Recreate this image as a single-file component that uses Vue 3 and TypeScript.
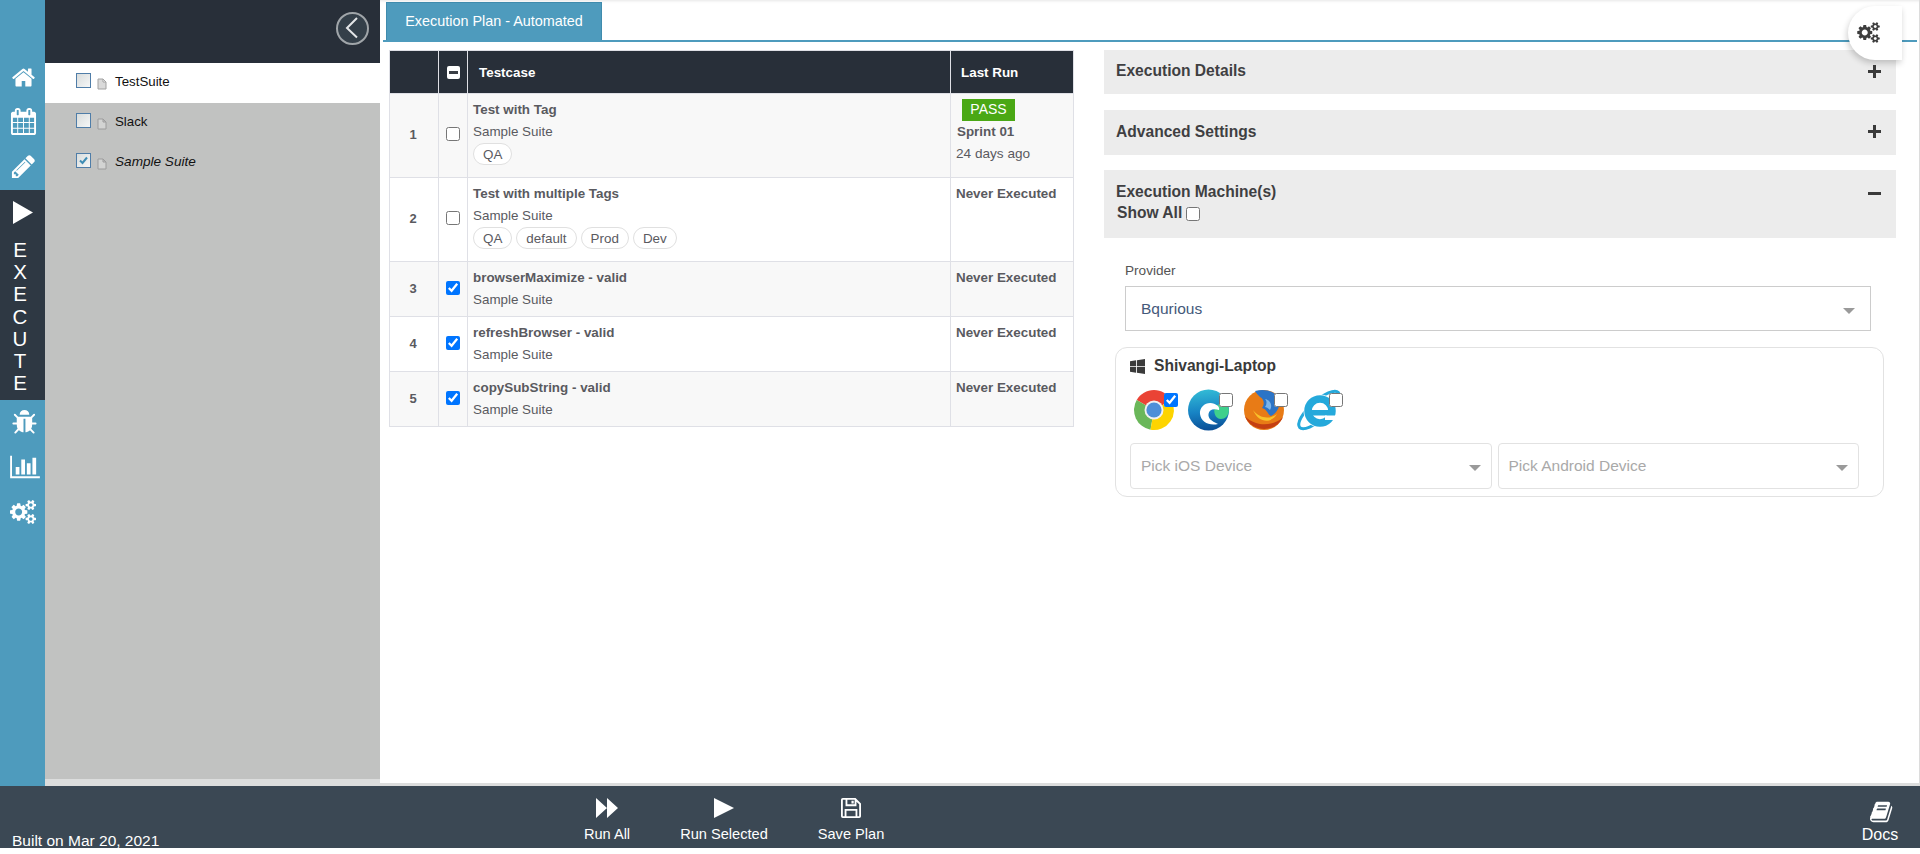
<script setup lang="ts">
interface Testcase {
  id: number
  name: string
  suite: string
  tags: string[]
  selected: boolean
  height: number
}

const suites = [
  { name: 'TestSuite', active: true, checked: false },
  { name: 'Slack', active: false, checked: false },
  { name: 'Sample Suite', active: false, checked: true }
]

const testcases: Testcase[] = [
  { id: 1, name: 'Test with Tag', suite: 'Sample Suite', tags: ['QA'], selected: false, height: 84 },
  { id: 2, name: 'Test with multiple Tags', suite: 'Sample Suite', tags: ['QA', 'default', 'Prod', 'Dev'], selected: false, height: 84 },
  { id: 3, name: 'browserMaximize - valid', suite: 'Sample Suite', tags: [], selected: true, height: 55 },
  { id: 4, name: 'refreshBrowser - valid', suite: 'Sample Suite', tags: [], selected: true, height: 55 },
  { id: 5, name: 'copySubString - valid', suite: 'Sample Suite', tags: [], selected: true, height: 55 }
]

const cogs = 'M896 896q0-106-75-181t-181-75-181 75-75 181 75 181 181 75 181-75 75-181zm768 512q0-52-38-90t-90-38-90 38-38 90q0 53 37.5 90.5t90.5 37.5 90.5-37.5 37.5-90.5zm0-1024q0-52-38-90t-90-38-90 38-38 90q0 53 37.5 90.5t90.5 37.5 90.5-37.5 37.5-90.5zm-384 421v185q0 10-7 19.5t-16 10.5l-155 24q-11 35-32 76 34 48 90 115 7 11 7 20 0 12-7 19-23 30-82.5 89.5t-78.5 59.5q-11 0-21-7l-115-90q-37 19-77 31-11 108-23 155-7 24-30 24h-186q-11 0-20-7.5t-10-17.5l-23-153q-34-10-75-31l-118 89q-7 7-20 7-11 0-21-8-144-133-144-160 0-9 7-19 10-14 41-53t47-61q-23-44-35-82l-152-24q-10-1-17-9.5t-7-19.5v-185q0-10 7-19.5t16-10.5l155-24q11-35 32-76-34-48-90-115-7-11-7-20 0-12 7-20 22-30 82-89t79-59q11 0 21 7l115 90q34-18 77-32 11-108 23-154 7-24 30-24h186q11 0 20 7.5t10 17.5l23 153q34 10 75 31l118-89q8-7 20-7 11 0 21 8 144 133 144 160 0 8-7 19-12 16-42 54t-45 60q23 48 34 82l152 23q10 2 17 10.5t7 19.5zm640 533v140q0 16-149 31-12 27-30 52 51 113 51 138 0 4-4 7-122 71-124 71-8 0-46-47t-52-68q-20 2-30 2t-30-2q-14 21-52 68t-46 47q-2 0-124-71-4-3-4-7 0-25 51-138-18-25-30-52-149-15-149-31v-140q0-16 149-31 13-29 30-52-51-113-51-138 0-4 4-7 4-2 35-20t59-34 30-16q8 0 46 46.5t52 67.5q20-2 30-2t30 2q51-71 92-112l6-2q4 0 124 70 4 3 4 7 0 25-51 138 17 23 30 52 149 15 149 31zm0-1024v140q0 16-149 31-12 27-30 52 51 113 51 138 0 4-4 7-122 71-124 71-8 0-46-47t-52-68q-20 2-30 2t-30-2q-14 21-52 68t-46 47q-2 0-124-71-4-3-4-7 0-25 51-138-18-25-30-52-149-15-149-31v-140q0-16 149-31 13-29 30-52-51-113-51-138 0-4 4-7 4-2 35-20t59-34 30-16q8 0 46 46.5t52 67.5q20-2 30-2t30 2q51-71 92-112l6-2q4 0 124 70 4 3 4 7 0 25-51 138 17 23 30 52 149 15 149 31z'
</script>

<template>
  <div class="page">
    <div class="top">
      <nav class="rail">
        <div class="rail-group first">
          <svg class="ri home" viewBox="0 0 1792 1792"><path d="M1472 992v480q0 26-19 45t-45 19h-384v-384h-256v384h-384q-26 0-45-19t-19-45v-480q0-1 .5-3t.5-3l575-474 575 474q1 2 1 6zm223-69l-62 74q-8 9-21 11h-3q-13 0-21-7l-692-577-692 577q-12 8-24 7-13-2-21-11l-62-74q-8-10-7-23.5t11-21.5l719-599q32-26 76-26t76 26l244 204v-195q0-14 9-23t23-9h192q14 0 23 9t9 23v408l219 182q10 8 11 21.5t-7 23.5z" /></svg>
          <svg class="ri cal" viewBox="0 0 1792 1792"><path d="M192 1664h288v-288h-288v288zm352 0h320v-288h-320v288zm-352-352h288v-320h-288v320zm352 0h320v-320h-320v320zm-352-384h288v-288h-288v288zm736 736h320v-288h-320v288zm-384-736h320v-288h-320v288zm768 736h288v-288h-288v288zm-384-352h320v-320h-320v320zm-352-864v-288q0-13-9.5-22.5t-22.5-9.5h-64q-13 0-22.5 9.5t-9.5 22.5v288q0 13 9.5 22.5t22.5 9.5h64q13 0 22.5-9.5t9.5-22.5zm736 864h288v-320h-288v320zm-384-384h320v-288h-320v288zm384 0h288v-288h-288v288zm32-480v-288q0-13-9.5-22.5t-22.5-9.5h-64q-13 0-22.5 9.5t-9.5 22.5v288q0 13 9.5 22.5t22.5 9.5h64q13 0 22.5-9.5t9.5-22.5zm384-64v1280q0 52-38 90t-90 38h-1408q-52 0-90-38t-38-90v-1280q0-52 38-90t90-38h128v-96q0-66 47-113t113-47h64q66 0 113 47t47 113v96h384v-96q0-66 47-113t113-47h64q66 0 113 47t47 113v96h128q52 0 90 38t38 90z" /></svg>
          <svg class="ri pen" viewBox="0 0 1792 1792"><path d="M491 1536l91-91-235-235-91 91v107h128v128h107zm523-928q0-22-22-22-10 0-17 7l-542 542q-7 7-7 17 0 22 22 22 10 0 17-7l542-542q7-7 7-17zm-54-192l416 416-832 832h-416v-416zm683 96q0 53-37 90l-166 166-416-416 166-165q36-38 90-38 53 0 91 38l235 234q37 39 37 91z" /></svg>
        </div>
        <div class="rail-active">
          <svg class="play" viewBox="0 0 20 23"><path d="M0 0 L20 11.5 L0 23 Z" /></svg>
          <span v-for="(c, i) in 'EXECUTE'" :key="i" class="letter">{{ c }}</span>
        </div>
        <div class="rail-group">
          <svg class="ri bug" viewBox="0 0 1664 1792"><path d="M1696 960q0 26-19 45t-45 19h-224q0 171-67 290l208 209q19 19 19 45t-19 45q-18 19-45 19t-45-19l-198-197q-5 5-15 13t-42 28.5-65 36.5-82 29-97 13v-896h-128v896q-51 0-101.5-13.5t-87-33-66-39-43.5-32.5l-15-14-183 207q-20 21-48 21-24 0-43-16-19-18-20.5-44.5t15.5-46.5l202-227q-58-114-58-274h-224q-26 0-45-19t-19-45 19-45 45-19h224v-294l-173-173q-19-19-19-45t19-45 45-19 45 19l173 173h844l173-173q19-19 45-19t45 19 19 45-19 45l-173 173v294h224q26 0 45 19t19 45zm-480-576h-640q0-133 93.5-226.5t226.5-93.5 226.5 93.5 93.5 226.5z" /></svg>
          <svg class="ri chart" viewBox="0 0 2048 1792"><path d="M640 896v512h-256v-512h256zm384-512v1024h-256v-1024h256zm1024 1152v128h-2048v-1536h128v1408h1920zm-640-896v768h-256v-768h256zm384-384v1152h-256v-1152h256z" /></svg>
          <svg class="ri gears" viewBox="0 0 1920 1792"><path :d="cogs" /></svg>
        </div>
      </nav>

      <aside class="sidebar">
        <div class="side-head">
          <button class="collapse">
            <svg viewBox="0 0 29 29"><path d="M19 4 L9 14 L19 23.500" /></svg>
          </button>
        </div>
        <div class="suite-list">
          <div v-for="s in suites" :key="s.name" class="suite" :class="{ active: s.active }">
            <span class="tree-check">
              <svg v-if="s.checked" viewBox="0 0 13 13"><path d="M3 6.5 L5.5 9 L10 3.5" /></svg>
            </span>
            <svg class="file" viewBox="0 0 10 12"><path d="M1 1 H6 L9 4 V11 H1 Z M6 1 V4 H9" /></svg>
            <span class="suite-name" :class="{ italic: s.checked }">{{ s.name }}</span>
          </div>
        </div>
        <div class="side-foot"></div>
      </aside>

      <main class="main">
        <div class="tabs">
          <div class="tab">Execution Plan - Automated</div>
        </div>
        <button class="float-gear">
          <svg viewBox="0 0 1920 1792"><path :d="cogs" /></svg>
        </button>

        <div class="content">
          <section class="left">
            <table class="plan">
              <thead>
                <tr>
                  <th class="c-num"></th>
                  <th class="c-check"><span class="indet"></span></th>
                  <th class="c-name">Testcase</th>
                  <th class="c-last">Last Run</th>
                </tr>
              </thead>
              <tbody>
                <tr v-for="t in testcases" :key="t.id" :style="{ height: t.height + 'px' }">
                  <td class="num">{{ t.id }}</td>
                  <td class="chk"><input type="checkbox" :checked="t.selected"></td>
                  <td class="info">
                    <div class="tc-name">{{ t.name }}</div>
                    <div class="tc-suite">{{ t.suite }}</div>
                    <div v-if="t.tags.length" class="tags">
                      <span v-for="g in t.tags" :key="g" class="tag">{{ g }}</span>
                    </div>
                  </td>
                  <td class="last">
                    <template v-if="t.id === 1">
                      <span class="pass">PASS</span>
                      <div class="sprint">Sprint 01</div>
                      <div class="ago">24 days ago</div>
                    </template>
                    <div v-else class="never">Never Executed</div>
                  </td>
                </tr>
              </tbody>
            </table>
          </section>

          <section class="right">
            <div class="panel p1"><span>Execution Details</span><b class="sign plus"></b></div>
            <div class="panel p2"><span>Advanced Settings</span><b class="sign plus"></b></div>
            <div class="panel p3">
              <div>
                <div>Execution Machine(s)</div>
                <label class="show-all">Show All <input type="checkbox"></label>
              </div>
              <b class="sign minus"></b>
            </div>

            <div class="provider">
              <div class="prov-label">Provider</div>
              <div class="prov-select"><span>Bqurious</span><i class="caret"></i></div>
            </div>

            <div class="machine">
              <div class="m-title">
                <svg viewBox="0 0 16 16"><path d="M0 2.3 L6.5 1.4 V7.6 H0 Z M7.4 1.3 L16 0 V7.6 H7.4 Z M0 8.4 H6.5 V14.6 L0 13.7 Z M7.4 8.4 H16 V16 L7.4 14.7 Z" /></svg>
                <span>Shivangi-Laptop</span>
              </div>
              <div class="browsers">
                <div class="browser">
                  <svg viewBox="0 0 48 48">
                    <path fill="#ea4335" d="M24 24 L6.7 14 A20 20 0 0 1 41.3 14 Z" />
                    <path fill="#6ab75a" d="M24 24 L6.7 14 A20 20 0 0 0 20.5 43.7 Z" />
                    <path fill="#fdd400" d="M24 24 L41.3 14 A20 20 0 0 1 20.5 43.7 Z" />
                    <circle cx="24" cy="24" r="9.5" fill="#f1f1f1" />
                    <circle cx="24" cy="24" r="7.6" fill="#4e8fd8" />
                  </svg>
                  <input type="checkbox" checked>
                </div>
                <div class="browser">
                  <svg viewBox="0 0 48 48">
                    <defs>
                      <linearGradient id="edgeA" x1="0.3" y1="0" x2="0.4" y2="1">
                        <stop offset="0" stop-color="#33bcd6" />
                        <stop offset="0.55" stop-color="#1783c4" />
                        <stop offset="1" stop-color="#0a4f96" />
                      </linearGradient>
                    </defs>
                    <circle cx="23.5" cy="24" r="20.500" fill="url(#edgeA)" />
                    <path fill="#3fd08c" d="M30 20 C36 16 43 18 44 24 C43.500 30 40 33 36 33 C30 33 28 26 30 20 Z" />
                    <path fill="#fff" d="M33 20 C25 13 14 19 15 28 C16 36 24 40 33 38 C26 35 23 32 23.500 28 C24 24 28 22 34 24 C34.500 23 34 21 33 20 Z" />
                  </svg>
                  <input type="checkbox">
                </div>
                <div class="browser">
                  <svg viewBox="0 0 48 48">
                    <circle cx="24" cy="24" r="20" fill="#e87b16" />
                    <path fill="#c43f12" d="M5 30 C10 46 36 48 43 31 C37 38 24 40 16 37 C11 35 7 33 5 30 Z" />
                    <path fill="#2c74c6" d="M15 5 C26 2 35 6 39 12 C41 20 37 27 31 30 C27 28 28 24 22 22 C25 18 24 13 20 11 C18 9 16 7 15 5 Z" />
                    <path fill="#7cb4e8" d="M25 13 C30 14 33 19 30 24 C28 22 26 21 25 21 C27 18 27 15 25 13 Z" />
                    <path fill="#f6b21b" d="M39 7 L44 19 L36 13 Z" />
                    <path fill="#f9c22a" d="M13 24 C19 32 29 34 37 28 C32 37 19 38 13 24 Z" />
                  </svg>
                  <input type="checkbox">
                </div>
                <div class="browser">
                  <svg viewBox="0 0 48 48">
                    <ellipse cx="24" cy="24" rx="26" ry="9" transform="rotate(-42 24 24)" fill="none" stroke="#25a9db" stroke-width="3" />
                    <circle cx="25" cy="25" r="16.500" fill="#fff" />
                    <circle cx="25" cy="25" r="12" fill="none" stroke="#25a9db" stroke-width="7.500" />
                    <rect x="13" y="24" width="26" height="5.500" fill="#25a9db" />
                    <rect x="30" y="29.500" width="12" height="4.500" fill="#fff" />
                  </svg>
                  <input type="checkbox">
                </div>
              </div>
              <div class="devices">
                <div class="device"><span>Pick iOS Device</span><i class="caret"></i></div>
                <div class="device"><span>Pick Android Device</span><i class="caret"></i></div>
              </div>
            </div>
          </section>
        </div>
        <div class="main-foot"></div>
      </main>
    </div>

    <footer class="footer">
      <div class="built">Built on Mar 20, 2021</div>
      <div class="actions">
        <div class="action run-all">
          <svg viewBox="0 0 22 20"><path d="M0 0 L11 10 L0 20 Z M11 0 L22 10 L11 20 Z" /></svg>
          <span>Run All</span>
        </div>
        <div class="action run-sel">
          <svg viewBox="0 0 20 20"><path d="M0 0 L20 10 L0 20 Z" /></svg>
          <span>Run Selected</span>
        </div>
        <div class="action save">
          <svg viewBox="0 0 22 22"><path fill-rule="evenodd" d="M0 2 Q0 0 2 0 H16 L22 6 V20 Q22 22 20 22 H2 Q0 22 0 20 Z M2 2 V20 H4 V12 H18 V20 H20 V7 L17 4 V9 H5 V2 Z M7 2 V7 H15 V2 Z M11.500 3 H14 V6 H11.500 Z M6 14 V20 H16 V14 Z" /></svg>
          <span>Save Plan</span>
        </div>
      </div>
      <div class="docs">
        <svg viewBox="0 0 1792 1792"><path d="M1639 478q40 57 18 129l-275 906q-19 64-76.500 107.500t-122.500 43.500h-923q-77 0-148.500-53.500t-99.500-131.500q-24-67-2-127 0-4 3-27t4-37q1-8-3-21.500t-3-19.500q2-11 8-21t16.500-23.500 16.500-23.500q23-38 45-91.500t30-91.500q3-10 .5-30t-.5-28q3-11 17-28t17-23q21-36 42-92t25-90q1-9-2.500-32t.5-28q4-13 22-30.500t22-22.500q19-26 42.500-84.500t27.500-96.500q1-8-3-25.500t-2-26.500q2-8 9-18t18-23 17-21q8-12 16.500-30.500t15-35 16-36 19.500-32 26.500-23.500 36-11.500 47.500 5.500l-1 3q38-9 51-9h761q74 0 114 56t18 130l-274 906q-36 119-71.500 153.500t-128.500 34.500h-869q-27 0-38 15-11 16-1 43 24 70 144 70h923q29 0 56-15.500t35-41.500l300-987q7-22 5-57 38 15 59 43zm-1064 2q-4 13 2 22.500t20 9.500h608q13 0 25.500-9.500t16.500-22.500l21-64q4-13-2-22.500t-20-9.500h-608q-13 0-25.500 9.500t-16.500 22.500zm-83 256q-4 13 2 22.500t20 9.500h608q13 0 25.500-9.500t16.500-22.500l21-64q4-13-2-22.500t-20-9.500h-608q-13 0-25.500 9.500t-16.500 22.500z" /></svg>
        <span>Docs</span>
      </div>
    </footer>
  </div>
</template>

<style>
html, body {
  margin: 0;
  height: 854px;
  overflow: hidden;
  background: #fff;
}
</style>

<style scoped>
.page {
  width: 1920px;
  height: 854px;
  display: flex;
  flex-direction: column;
  font-family: "Liberation Sans", Arial, sans-serif;
  color: #5a5a5f;
  font-size: 13px;
}

.top {
  display: flex;
  height: 786px;
}

/* left rail */
.rail {
  width: 45px;
  background: #4e9bbd;
  flex: none;
  display: flex;
  flex-direction: column;
}

.rail-group {
  display: flex;
  flex-direction: column;
  align-items: center;
  fill: #fff;
}

.rail-group.first {
  padding-top: 65px;
  height: 125px;
}

.ri {
  display: block;
}

.home { width: 25px; height: 25px; margin-bottom: 18px; margin-left: 2px; }
.cal { width: 27px; height: 27px; margin-bottom: 18px; margin-left: 1px; }
.pen { width: 27px; height: 27px; margin-left: 1px; }

.rail-active {
  height: 210px;
  background: #2e3843;
  color: #fff;
  display: flex;
  flex-direction: column;
  align-items: center;
  padding-right: 5px;
  box-sizing: border-box;
  padding-top: 11px;
}

.play {
  width: 20px;
  height: 23px;
  fill: #fff;
  margin-bottom: 15px;
  margin-left: 6px;
}

.letter {
  font-size: 20.500px;
  line-height: 22.200px;
}

.bug { width: 27px; height: 27px; margin-top: 9px; margin-left: 2px; }
.chart { width: 30px; height: 26px; margin-top: 18px; margin-left: 4px; }
.gears { width: 26px; height: 26px; margin-top: 19px; margin-left: 1px; }

/* sidebar */
.sidebar {
  width: 335px;
  flex: none;
  display: flex;
  flex-direction: column;
  background: #c1c2c1;
}

.side-head {
  height: 63px;
  background: #282f39;
  display: flex;
  justify-content: flex-end;
  align-items: flex-start;
  box-sizing: border-box;
  padding: 12px 11px 0 0;
}

.collapse {
  width: 33px;
  height: 33px;
  padding: 0;
  border: 2px solid #a0a5a9;
  border-radius: 50%;
  background: #343f49;
  box-sizing: border-box;
}

.collapse svg {
  width: 29px;
  height: 29px;
  display: block;
  fill: none;
  stroke: #e4e6e8;
  stroke-width: 2;
}

.suite-list {
  flex: 1;
}

.suite {
  height: 40px;
  display: flex;
  align-items: center;
  padding-left: 31px;
  color: #111;
}

.suite.active {
  background: #fff;
}

.tree-check {
  width: 15px;
  height: 15px;
  border: 1px solid #4f7da8;
  background: linear-gradient(135deg, #d8dcdc, #f6f7f7);
  box-sizing: border-box;
  margin-top: -5px;
  display: block;
}

.tree-check svg {
  width: 13px;
  height: 13px;
  display: block;
  fill: none;
  stroke: #3f8db5;
  stroke-width: 2;
}

.file {
  width: 10px;
  height: 12px;
  margin: 1px 8px 0 6px;
  fill: #d6d6d6;
  stroke: #9a9a9a;
  stroke-width: 1;
  opacity: 0.9;
}

.suite-name {
  font-size: 13.300px;
  margin-top: -3px;
}

.suite-name.italic {
  font-style: italic;
  font-size: 13.600px;
}

.side-foot {
  height: 7px;
  background: #dcdddd;
}

/* main */
.main {
  flex: 1;
  position: relative;
  display: flex;
  flex-direction: column;
  background: #fff;
  box-shadow: inset 0 4px 3px -3px #e6e6e6;
  border-right: 1px solid #dcdcdc;
  min-width: 0;
}

.tabs {
  height: 40px;
  margin: 0 2px 0 3px;
  border-bottom: 2px solid #4e9bbd;
  display: flex;
  padding-left: 3px;
  box-sizing: content-box;
}

.tab {
  margin-top: 2px;
  width: 216px;
  background: #4e9bbd;
  color: #fff;
  font-size: 14.400px;
  line-height: 36px;
  text-align: center;
  border: 1px solid #3f8bad;
  border-bottom: none;
  box-sizing: border-box;
}

.float-gear {
  position: absolute;
  top: 6px;
  right: 17px;
  width: 54px;
  height: 54px;
  border: none;
  background: #fff;
  border-radius: 27px 0 0 27px;
  box-shadow: -1px 3px 6px rgba(0, 0, 0, 0.2);
  padding: 0;
}

.float-gear svg {
  width: 23px;
  height: 21px;
  fill: #3d3d3d;
  display: block;
  margin: 0 0 2px 9px;
}

.content {
  flex: 1;
  display: flex;
  padding-top: 8px;
  min-height: 0;
}

.left {
  width: 685px;
  margin-left: 9px;
  flex: none;
}

.plan {
  width: 685px;
  border-collapse: collapse;
  table-layout: fixed;
  font-size: 12px;
}

.plan th {
  background: #282f39;
  color: #fff;
  height: 42px;
  font-size: 13.400px;
  text-align: left;
  border: 1px solid #dfe0e6;
  border-bottom: 0;
  padding: 0;
}

.c-num { width: 48px; }
.c-check { width: 28px; text-align: center !important; }
.c-last { width: 112px; padding-left: 10px !important; }
.c-name { padding-left: 11px !important; }

.indet {
  display: block;
  width: 13px;
  height: 13px;
  margin: 0 auto;
  background: #fff;
  border-radius: 2px;
  position: relative;
}

.indet::after {
  content: "";
  position: absolute;
  left: 2px;
  right: 2px;
  top: 5px;
  height: 3px;
  background: #3a3f46;
}

.plan td {
  border: 1px solid #dfe0e6;
  padding: 0;
  vertical-align: top;
}

.plan tbody tr:nth-child(odd) td {
  background: #f8f8f8;
}

.plan td.num {
  text-align: center;
  vertical-align: middle;
  font-weight: bold;
  font-size: 13px;
  padding: 0 2px 2px 0;
}

.plan td.chk {
  text-align: center;
  vertical-align: middle;
}

.chk input {
  width: 14px;
  height: 14px;
  display: block;
  margin: -3px auto 0;
}

.plan td.info {
  padding: 7px 5px 0 5px;
}

.tc-name {
  font-weight: bold;
  font-size: 13.400px;
  line-height: 17px;
}

.tc-suite {
  font-size: 13.400px;
  line-height: 16px;
  margin-top: 6px;
}

.tags {
  display: flex;
  gap: 4px;
  margin-top: 3px;
}

.tag {
  border: 1px solid #e0e0e0;
  border-radius: 12px;
  padding: 0 9px;
  height: 22px;
  line-height: 21px;
  font-size: 13.400px;
  box-sizing: border-box;
  background: #fff;
}

.plan td.last {
  padding: 5px 5px 0 5px;
}

.pass {
  display: block;
  width: 53px;
  height: 22px;
  line-height: 21px;
  margin-left: 6px;
  background: #4aa815;
  color: #fff;
  text-align: center;
  font-size: 14px;
}

.sprint {
  font-weight: bold;
  font-size: 13.400px;
  line-height: 22px;
  margin-left: 1px;
}

.ago {
  font-size: 13.600px;
  line-height: 22px;
}

.never {
  font-weight: bold;
  font-size: 13.400px;
  line-height: 17px;
  margin-top: 2px;
}

/* right column */
.right {
  margin-left: 30px;
  width: 792px;
  flex: none;
}

.panel {
  background: #ececec;
  display: flex;
  justify-content: space-between;
  padding: 0 12px 0 12px;
  color: #3f3f42;
  font-weight: bold;
  font-size: 15.600px;
  box-sizing: border-box;
}

.p1 { height: 44px; align-items: center; margin-bottom: 16px; padding-bottom: 2px; }
.p2 { height: 45px; align-items: center; margin-bottom: 15px; padding-bottom: 2px; }
.p3 { height: 68px; padding-top: 11px; line-height: 21px; }

.sign {
  width: 13px;
  height: 13px;
  display: block;
  position: relative;
  margin-right: 3px;
}

.sign::before,
.plus::after {
  content: "";
  position: absolute;
  background: #3a3a3a;
}

.sign::before {
  left: 0;
  right: 0;
  top: 5px;
  height: 3px;
}

.plus::after {
  top: 0;
  bottom: 0;
  left: 5px;
  width: 3px;
}

.minus {
  margin-top: 6px;
}

.show-all {
  display: flex;
  align-items: center;
  gap: 4px;
  margin-left: 1px;
}

.show-all input {
  width: 14px;
  height: 14px;
  margin: 2px 0 0;
}

.provider {
  margin: 25px 25px 0 21px;
}

.prov-label {
  font-size: 13.600px;
  line-height: 15px;
  color: #555;
  margin-bottom: 8px;
}

.prov-select {
  height: 45px;
  border: 1px solid #ccc;
  box-sizing: border-box;
  display: flex;
  align-items: center;
  justify-content: space-between;
  padding: 0 15px;
  font-size: 15.500px;
  color: #44597a;
}

.caret {
  display: block;
  width: 0;
  height: 0;
  border-left: 6px solid transparent;
  border-right: 6px solid transparent;
  border-top: 6px solid #9a9a9a;
  margin-top: 4px;
}

.machine {
  margin: 16px 12px 0 11px;
  height: 150px;
  border: 1px solid #e2e2e2;
  border-radius: 12px;
  box-sizing: border-box;
  padding: 0 24px 0 14px;
}

.m-title {
  display: flex;
  align-items: center;
  gap: 9px;
  height: 36px;
  font-weight: bold;
  font-size: 15.600px;
  color: #3a3a3a;
}

.m-title svg {
  width: 15px;
  height: 15px;
  fill: #3a3a3a;
}

.browsers {
  display: flex;
  gap: 7px;
  height: 59px;
  align-items: flex-start;
  padding-top: 2px;
  box-sizing: border-box;
}

.browser {
  width: 48px;
  height: 48px;
  position: relative;
}

.browser svg {
  width: 48px;
  height: 48px;
  display: block;
}

.browser input {
  position: absolute;
  top: 7px;
  right: 0;
  width: 14px;
  height: 14px;
  margin: 0;
}

.devices {
  display: flex;
  gap: 6px;
}

.device {
  flex: 1;
  height: 46px;
  border: 1px solid #e2e2e2;
  border-radius: 4px;
  box-sizing: border-box;
  display: flex;
  align-items: center;
  justify-content: space-between;
  padding: 0 10px;
  font-size: 15.500px;
  color: #a9a9a9;
}

.main-foot {
  height: 3px;
  background: #dcdddd;
}

/* footer */
.footer {
  height: 62px;
  background: #3b4854;
  color: #fff;
  font-size: 14.600px;
  position: relative;
  display: flex;
  justify-content: space-between;
  overflow: hidden;
  flex: none;
}

.built {
  margin: 46px 0 0 12px;
  font-size: 15.500px;
  white-space: nowrap;
  width: 570px;
}

.actions {
  display: flex;
  flex: 1;
  align-items: flex-start;
}

.action {
  display: flex;
  flex-direction: column;
  align-items: center;
  padding-top: 12px;
  gap: 8px;
}

.action svg {
  fill: #fff;
  display: block;
  height: 20px;
}

.run-all { width: 50px; }
.run-all svg { width: 22px; }
.run-sel { margin-left: 47px; width: 90px; }
.run-sel svg { width: 20px; }
.save { margin-left: 48px; width: 68px; }
.save svg { width: 22px; height: 20px; }

.docs {
  display: flex;
  flex-direction: column;
  align-items: center;
  width: 36px;
  margin-right: 22px;
  padding-top: 14px;
  gap: 2px;
  font-size: 16px;
}

.docs svg {
  width: 24px;
  height: 24px;
  fill: #fff;
  display: block;
  margin-left: 3px;
}
</style>
